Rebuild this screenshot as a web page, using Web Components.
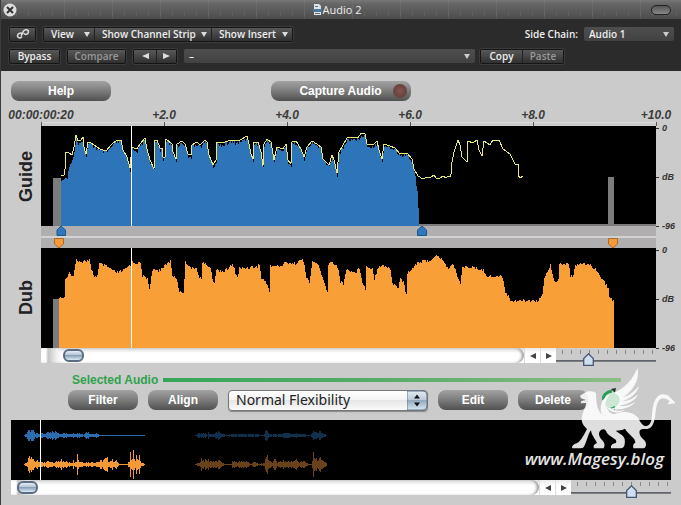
<!DOCTYPE html>
<html lang="en">
  <head>
    <meta charset="UTF-8" />
    <meta name="viewport" content="width=device-width, initial-scale=1.0" />
    <title>Audio 2</title>
    <style>
      body {
        margin: 0;
        background: #cbcbcb;
        font-family: "Liberation Sans", Arial, sans-serif;
      }
    </style>
  </head>

  <body>
    <template id="plugin-window-template">
      <style>
        :host {
          display: block;
          position: relative;
          box-sizing: border-box;
          min-height: 100vh;
          background: #cbcbcb;
          border-left: 1px solid #3c3c3c;
          overflow: hidden;
        }
        .actions {
          display: grid;
          grid-template-columns: 1fr 140px 1fr;
          padding: 10px 10px 0;
        }
        .plots {
          display: grid;
          grid-template-columns: 30px 1fr 25px;
          padding-left: 10px;
        }
        .plots time-ruler,
        .plots marker-lanes {
          grid-column: 2;
        }
        h2 {
          grid-column: 1;
          margin: 0;
          font-size: 18px;
          line-height: 30px;
          text-align: center;
          color: #222;
          writing-mode: vertical-rl;
          transform: rotate(180deg);
        }
        .scroll {
          display: flex;
          align-items: flex-start;
          height: 18px;
          padding: 0 25px 0 40px;
        }
        .scroll.wide {
          padding: 0 10px;
        }
        scroll-strip {
          flex: 1;
        }
        .selected {
          display: flex;
          align-items: center;
          gap: 5px;
          padding: 7px 60px 0 71px;
          font-size: 12px;
          font-weight: bold;
          line-height: 14px;
          color: #2ea24c;
        }
        .selected hr {
          flex: 1;
          height: 4px;
          margin: 0;
          border: 0;
          background: linear-gradient(90deg, #35a658, #58ad67 50%, #8cbe85);
        }
        .edit {
          display: flex;
          align-items: center;
          gap: 10px;
          height: 20px;
          padding: 3px 10px 10px 67px;
        }
        .edit pill-button {
          width: 70px;
        }
        .edit flex-select {
          width: 200px;
        }
        overview-plot {
          margin: 0 10px;
        }
        water-mark {
          position: absolute;
          right: 4px;
          top: 367px;
        }
      </style>
      <slot name="header"></slot>
      <div class="actions">
        <pill-button style="width: 100px">Help</pill-button>
        <pill-button record>Capture Audio</pill-button>
      </div>
      <div class="plots">
        <time-ruler></time-ruler>
        <h2>Guide</h2>
        <level-plot kind="guide"></level-plot>
        <db-axis></db-axis>
        <marker-lanes></marker-lanes>
        <h2>Dub</h2>
        <level-plot kind="dub"></level-plot>
        <db-axis></db-axis>
      </div>
      <div class="scroll">
        <scroll-strip value="48"></scroll-strip>
        <zoom-slider value="30"></zoom-slider>
      </div>
      <div class="selected"><span>Selected Audio</span><hr /></div>
      <div class="edit">
        <pill-button>Filter</pill-button>
        <pill-button>Align</pill-button>
        <flex-select></flex-select>
        <pill-button>Edit</pill-button>
        <pill-button>Delete</pill-button>
        <play-button></play-button>
      </div>
      <overview-plot></overview-plot>
      <div class="scroll wide">
        <scroll-strip value="12"></scroll-strip>
        <zoom-slider value="62"></zoom-slider>
      </div>
      <water-mark>www.Magesy.blog</water-mark>
    </template>

    <template id="title-bar-template">
      <style>
        :host {
          display: grid;
          grid-template-columns: 1fr auto 1fr;
          align-items: center;
          height: 19px;
          padding: 0 10px 0 2px;
          background:
            repeating-linear-gradient(90deg, transparent 0 11px, #7775 11px 12px) 4px 12px / 100% 4px no-repeat,
            repeating-linear-gradient(90deg, transparent 0 47px, #8883 47px 48px) 16px 0,
            linear-gradient(#777, #666 4px, #4c4c4c);
          color: #eee;
          font: 11px/18px "Open Sans", "Noto Sans", sans-serif;
        }
        button {
          display: block;
          padding: 0;
          border: 0;
          background: none;
        }
        .title {
          display: flex;
          align-items: center;
          gap: 1px;
        }
        .lozenge {
          justify-self: end;
          width: 20px;
          height: 10px;
          border: 1px solid #222;
          border-radius: 5px;
          background: linear-gradient(#555, #888);
        }
        svg {
          display: block;
        }
      </style>
      <button aria-label="Close">
        <svg width="14" height="14" viewBox="0 0 14 14">
          <circle cx="7" cy="7" r="6.5" fill="#dedede" />
          <path d="M4 4l6 6M10 4l-6 6" stroke="#333" stroke-width="2" />
        </svg>
      </button>
      <div class="title">
        <svg width="9" height="11" viewBox="0 0 9 11">
          <path d="M1 0h5l2 2v9H1z" fill="#dbe3ea" />
          <path d="M0 5h9v3H0z" fill="#50759c" />
          <path d="M2 2h3v1H2zM2 9h5v1H2z" fill="#69717a" />
        </svg>
        <slot></slot>
      </div>
      <button class="lozenge" aria-label="Toolbar"></button>
    </template>

    <template id="tool-bar-template">
      <style>
        :host {
          display: block;
          padding: 8px 7px 8px 8px;
          background: #2b2b2b;
          color: #eee;
          font: 600 10px/14px "Open Sans", "Noto Sans", sans-serif;
        }
        .row {
          display: flex;
          align-items: center;
          height: 14px;
        }
        .row + .row {
          margin-top: 8px;
        }
        .group {
          display: flex;
          margin-right: 7px;
          border: 1px solid #151515;
          border-radius: 2px;
          box-shadow: 0 0 0 1px #3b3b3b;
        }
        button {
          display: flex;
          align-items: center;
          justify-content: center;
          box-sizing: border-box;
          height: 13px;
          padding: 0 4px 0 7px;
          border: 0;
          background: linear-gradient(#585858, #303030);
          color: inherit;
          font: inherit;
          white-space: nowrap;
        }
        button + button {
          border-left: 1px solid #222;
        }
        .menu {
          justify-content: space-between;
        }
        button:disabled {
          color: #999;
        }
        .plain {
          padding: 0;
        }
        svg {
          display: block;
        }
        .pick {
          display: grid;
          align-items: center;
          border-radius: 2px;
          background: linear-gradient(#4e4e4e, #424242);
        }
        .pick > * {
          grid-area: 1 / 1;
        }
        .pick svg {
          justify-self: end;
          margin-right: 5px;
          pointer-events: none;
        }
        select {
          appearance: none;
          width: 100%;
          height: 14px;
          padding: 0 5px;
          border: 0;
          background: none;
          color: inherit;
          font: inherit;
        }
        .preset {
          flex: 0 1 291px;
          margin-right: 5px;
        }
        label {
          margin-left: auto;
          padding-right: 6px;
        }
      </style>
      <div class="row">
        <div class="group">
          <button class="plain" style="width: 25px" aria-label="Link">
            <svg width="14" height="12" viewBox="0 0 14 12" fill="none" stroke="#ddd" stroke-width="1.5">
              <path d="M6 8.5C4.500 11 1 9.800 1.600 7.300C2.200 4.800 5 4.500 6.500 6.200" />
              <path d="M5 7.800L7.500 3.200C9 .8 12.800 1.500 12.400 4.200C12 6.800 9 7 7.600 5.200" />
            </svg>
          </button>
        </div>
        <div class="group">
          <button class="menu" style="width: 50px">View <down-arrow></down-arrow></button>
          <button class="menu" style="width: 117px">Show Channel Strip <down-arrow></down-arrow></button>
          <button class="menu" style="width: 81px">Show Insert <down-arrow></down-arrow></button>
        </div>
        <label for="chain">Side Chain:</label>
        <div class="pick" style="width: 90px">
          <select id="chain"><option>Audio 1</option></select>
          <svg width="6" height="5"><path d="M0 0h6L3 5z" fill="#ccc" /></svg>
        </div>
      </div>
      <div class="row">
        <div class="group"><button class="plain" style="width: 49px">Bypass</button></div>
        <div class="group"><button class="plain" style="width: 57px" disabled>Compare</button></div>
        <div class="group">
          <button class="plain" style="width: 22px" aria-label="Previous setting">
            <svg width="7" height="6"><path d="M7 0v6L0 3z" fill="#ddd" /></svg>
          </button>
          <button class="plain" style="width: 20px" aria-label="Next setting">
            <svg width="7" height="6"><path d="M0 0v6l7-3z" fill="#ddd" /></svg>
          </button>
        </div>
        <div class="pick preset">
          <select aria-label="Setting"><option>–</option></select>
          <svg width="6" height="5"><path d="M0 0h6L3 5z" fill="#ccc" /></svg>
        </div>
        <div class="group">
          <button class="plain" style="width: 41px">Copy</button>
          <button class="plain" style="width: 41px" disabled>Paste</button>
        </div>
      </div>
    </template>

    <template id="down-arrow-template">
      <style>
        :host {
          display: block;
        }
        svg {
          display: block;
        }
      </style>
      <svg width="6" height="5"><path d="M0 0h6L3 5z" fill="#ddd" /></svg>
    </template>

    <template id="pill-button-template">
      <style>
        :host {
          display: block;
        }
        button {
          display: grid;
          grid-template-columns: 1fr;
          align-items: center;
          width: 100%;
          height: 20px;
          padding: 0;
          border: 0;
          border-radius: 8px;
          background: linear-gradient(#a2a2a2, #808080 45%, #505050);
          color: #fff;
          font: bold 12px/20px "Liberation Sans", Arial, sans-serif;
        }
        i {
          display: none;
          width: 14px;
          height: 14px;
          margin-right: 4px;
          border-radius: 7px;
          background: radial-gradient(#84564e, #6a443e 60%, #54413e);
        }
        :host([record]) button {
          grid-template-columns: 1fr 18px;
        }
        :host([record]) span {
          padding-left: 17px;
        }
        :host([record]) i {
          display: block;
        }
      </style>
      <button><span><slot></slot></span><i></i></button>
    </template>

    <template id="flex-select-template">
      <style>
        :host {
          display: grid;
          align-items: center;
        }
        select,
        svg {
          grid-area: 1 / 1;
        }
        select {
          appearance: none;
          box-sizing: border-box;
          width: 100%;
          height: 21px;
          padding: 0 7px;
          border: 1px solid #777;
          border-radius: 4px;
          background: linear-gradient(#fff, #f4f4f4 45%, #e6e6e6 50%, #fafafa);
          box-shadow: 0 1px 1px #888;
          color: #222;
          font: 14px/18px "Noto Sans", "Open Sans", sans-serif;
        }
        svg {
          justify-self: end;
          pointer-events: none;
        }
      </style>
      <select aria-label="Flexibility"><option>Normal Flexibility</option></select>
      <svg width="21" height="21" viewBox="0 0 21 21">
        <defs>
          <linearGradient id="cap" x2="0" y2="1">
            <stop offset="0" stop-color="#e4ebf2" />
            <stop offset=".48" stop-color="#bac8d7" />
            <stop offset=".5" stop-color="#94a9be" />
            <stop offset="1" stop-color="#d9e8f2" />
          </linearGradient>
        </defs>
        <path d="M0 1h16q4 0 4 4v11q0 4-4 4H0z" fill="url(#cap)" stroke="#65758a" />
        <path d="M7 8.500l3-4 3 4zM7 12.500l3 4 3-4z" fill="#111" />
      </svg>
    </template>

    <template id="play-button-template">
      <style>
        :host {
          display: block;
        }
        button {
          display: block;
          margin-left: 4px;
          padding: 0;
          border: 0;
          background: none;
        }
        svg {
          display: block;
        }
      </style>
      <button aria-label="Cycle">
        <svg width="22" height="26" viewBox="0 0 22 26">
          <circle cx="11" cy="13" r="9" fill="#cce7d6" />
          <path d="M10 4C4 5 1 9 1 13" fill="none" stroke="#2a9d55" stroke-width="3" />
          <path d="M8 21l5-2v5z" fill="#2a9d55" />
          <path d="M9 2l5-1-1 5z" fill="#22352a" />
        </svg>
      </button>
    </template>

    <template id="time-ruler-template">
      <style>
        :host {
          display: flex;
          justify-content: space-between;
          padding-top: 7px;
          color: #3b3b3b;
          font: italic bold 12px/14px "Liberation Sans", Arial, sans-serif;
          background: linear-gradient(#dadada, #dadada) 0 21px / 100% 1px no-repeat;
        }
        span {
          display: flex;
          flex-direction: column;
          align-items: center;
          width: 0;
          white-space: nowrap;
        }
        span::after {
          content: "";
          width: 1px;
          height: 4px;
          background: #555;
        }
      </style>
      <span>00:00:00:20</span><span>+2.0</span><span>+4.0</span><span>+6.0</span><span>+8.0</span><span>+10.0</span>
    </template>

    <template id="db-axis-template">
      <style>
        :host {
          display: flex;
          flex-direction: column;
          justify-content: space-between;
          padding-top: 2px;
          color: #333;
          font: italic bold 9px/10px "Liberation Sans", Arial, sans-serif;
        }
        span {
          display: flex;
          align-items: center;
          gap: 3px;
          height: 0;
        }
        span::before {
          content: "";
          width: 3px;
          height: 1px;
          background: #333;
        }
      </style>
      <span>0</span><span>dB</span><span>-96</span>
    </template>

    <template id="marker-lanes-template">
      <style>
        :host {
          display: block;
        }
        svg {
          display: block;
          width: 100%;
          height: 22px;
        }
      </style>
      <svg viewBox="0 0 615 22" preserveAspectRatio="none">
        <path d="M0 0h615v10H0zM0 12h615v10H0z" fill="#b0aeae" />
        <path d="M0 10h615v2H0z" fill="#d2d2d2" />
        <g fill="#2f78bd" stroke="#1d578f">
          <path d="M16 9.500V4l4-4 4.500 4v5.500z" />
          <path d="M376.500 9.500V4l4.500-4 4.500 4v5.500z" />
        </g>
        <g fill="#f59a34" stroke="#a86c2c">
          <path d="M13.500 12.500V18l4.500 4 4.500-4v-5.500z" />
          <path d="M567.500 12.500V18l4.500 4 4.500-4v-5.500z" />
        </g>
      </svg>
    </template>

    <template id="level-plot-template">
      <style>
        :host {
          display: block;
          background: #000;
        }
        svg {
          display: block;
          width: 100%;
          height: 100px;
          shape-rendering: crispEdges;
        }
      </style>
      <svg viewBox="0 0 615 100" preserveAspectRatio="none"></svg>
    </template>

    <template id="scroll-strip-template">
      <style>
        :host {
          display: flex;
          height: 15px;
          min-width: 0;
          background: linear-gradient(#d8d8d8, #fff 5px);
        }
        input {
          appearance: none;
          flex: 1;
          min-width: 0;
          height: 15px;
          margin: 0;
          border-radius: 0 8px 8px 0;
          background: linear-gradient(90deg, #fff 5px, #c4c4c4 7px, #f2f2f2 16px, transparent 22px);
          box-shadow: inset -3px 0 3px -1px #999;
        }
        input::-webkit-slider-thumb {
          appearance: none;
          box-sizing: border-box;
          width: 21px;
          height: 13px;
          border: 2px solid #5c6d83;
          border-radius: 6px;
          background: linear-gradient(#e4edf5, #b8c8d8 40%, #8ba1b8 50%, #dcecf6);
        }
        button {
          display: grid;
          place-items: center;
          width: 16px;
          height: 15px;
          padding: 0;
          border: 0;
          border-left: 1px solid #ddd;
          background: linear-gradient(#e9e9e9, #fff 5px);
        }
      </style>
      <input type="range" min="0" max="1000" aria-label="Scroll" />
      <button aria-label="Scroll left">
        <svg width="6" height="6"><path d="M6 0v6L0 3z" fill="#444" /></svg>
      </button>
      <button aria-label="Scroll right">
        <svg width="6" height="6"><path d="M0 0v6l6-3z" fill="#444" /></svg>
      </button>
    </template>

    <template id="zoom-slider-template">
      <style>
        :host {
          display: block;
          width: 100px;
          height: 18px;
          background:
            linear-gradient(#505860, #8b8b8b) 0 12px / 100% 2px no-repeat,
            repeating-linear-gradient(90deg, transparent 0 6px, #888 6px 7px, transparent 7px 9px) 0 2px / 100% 4px no-repeat;
        }
        input {
          appearance: none;
          display: block;
          width: 100px;
          height: 18px;
          margin: 0;
          padding-top: 4px;
          box-sizing: border-box;
          background: none;
        }
        input::-webkit-slider-thumb {
          appearance: none;
          width: 11px;
          height: 13px;
          background: url("data:image/svg+xml,%3Csvg xmlns='http://www.w3.org/2000/svg' width='11' height='13'%3E%3Cpath d='M.7 12.300V5.500L5.500.8l4.800 4.700v6.800z' fill='%23cfdef0' stroke='%23455670' stroke-width='1.300'/%3E%3C/svg%3E");
        }
      </style>
      <input type="range" min="0" max="100" aria-label="Zoom" />
    </template>

    <template id="overview-plot-template">
      <style>
        :host {
          display: block;
          background: #000;
        }
        svg {
          display: block;
          width: 100%;
          height: 60px;
          shape-rendering: crispEdges;
        }
      </style>
      <svg viewBox="0 0 660 60" preserveAspectRatio="none"></svg>
    </template>

    <template id="water-mark-template">
      <style>
        :host {
          display: flex;
          flex-direction: column;
          align-items: flex-end;
          color: #e4e4e4;
          font: italic 600 17px/20px "Open Sans", "Noto Sans", sans-serif;
          pointer-events: none;
        }
        svg {
          display: block;
          opacity: 0.87;
        }
        span {
          margin-right: 13px;
        }
      </style>
      <svg width="108" height="82" viewBox="24 21 324 246" fill="#fff">
        <path
          d="M57 107L71 98C84 91 99 93 105 99C105 124 108 150 122 163C138 171 151 165 163 161C192 151 220 157 233 176C240 191 247 198 257 199L250 207C237 207 233 211 237 225C242 237 255 241 255 252Q255 264 247 265H217Q214 252 223 248C224 232 202 225 192 206C184 211 174 211 165 212C171 220 189 224 191 238C193 254 190 264 180 265H150Q148 253 161 250Q169 248 164 239C154 230 138 225 135 212Q129 205 121 209C110 216 113 230 124 241Q135 252 128 265H99Q94 254 108 249C103 237 91 225 90 211C82 219 80 238 70 258Q68 265 59 265H33Q32 254 47 250Q59 246 78 207C68 198 59 187 63 169C66 151 76 140 75 129L59 130L61 123L75 120L60 115Z"
        />
        <path
          d="M122 163C113 137 125 112 147 103C125 128 133 144 151 154C163 160 181 157 193 149C182 153 166 155 157 148C185 150 211 142 223 126C208 136 189 140 174 137C202 134 225 120 231 103C216 117 201 124 183 124C208 116 229 99 234 78C219 95 207 105 187 111C213 94 237 62 230 23C214 59 191 86 158 98C177 105 179 120 174 130C164 145 150 151 136 139C142 158 153 164 163 162L145 171Z"
        />
        <path
          d="M249 198C269 202 272 181 273 163C276 126 285 103 307 103Q314 103 321 108L317 101L344 130L319 133L326 123C305 106 292 116 287 137C280 165 286 210 250 207Z"
        />
      </svg>
      <span><slot></slot></span>
    </template>

    <plugin-window>
      <title-bar slot="header">Audio 2</title-bar>
      <tool-bar slot="header"></tool-bar>
    </plugin-window>

    <script>
      // x,y pairs on the 615x100 plot
      const contour = "27,45 28,40 30,33 32,30 34,18 35,9 37,15 40,14 42,11 43,21 45,28 47,16 50,17 59,23 65,25 71,18 76,14 80,14 82,24 86,31 89,42 91,21 93,22 96,23 99,18 104,12 106,23 109,34 113,43 114,14 116,14 119,22 121,22 122,31 124,31 125,13 131,18 132,26 135,33 136,18 141,15 144,18 147,28 150,29 151,19 156,16 159,19 164,14 166,16 168,29 172,39 175,34 176,16 182,17 189,14 194,15 199,14 206,10 208,18 210,28 212,33 213,16 217,16 220,26 222,40 223,18 226,13 230,16 233,34 236,21 242,23 245,18 247,34 250,38 251,16 255,15 260,23 263,31 266,21 271,15 276,18 280,21 282,33 288,39 291,29 293,34 296,47 298,26 302,19 306,12 312,11 317,12 320,7 324,8 326,18 332,19 336,15 338,24 341,33 343,18 349,20 354,22 359,28 366,27 371,33";
      const guideTail = "373,43 377,50 382,53 386,51 389,52 393,49 396,53 399,52 402,50 405,52 407,50 409,51 410,48 411,36 413,26 417,14 419,19 421,31 426,36 427,15 432,17 436,14 438,24 441,30 443,15 449,19 452,14 458,14 462,23 469,28 474,38 477,38 477,49 479,52 482,50";
      const dubLevel = "18,48 23,48 24,31 28,24 32,27 35,9 38,12 48,11 50,21 53,27 56,26 58,14 67,18 74,23 81,22 87,17 91,13 99,14 101,26 106,29 108,39 111,21 117,21 124,16 129,11 131,26 135,29 138,42 142,43 144,13 152,20 155,17 158,29 160,28 161,13 169,18 171,29 173,33 175,20 183,22 191,15 196,28 198,19 216,17 218,14 220,29 224,32 228,41 229,16 239,17 244,13 254,14 260,10 263,14 265,29 268,33 271,12 277,15 280,26 286,42 287,16 290,12 296,17 299,32 302,34 305,20 314,23 318,18 321,32 324,40 325,17 331,19 333,29 337,17 341,15 349,20 351,34 357,38 359,29 362,32 365,46 366,24 376,13 391,10 396,6 402,11 406,19 412,15 416,26 419,34 421,18 426,17 442,21 446,27 461,27 464,42 469,51 497,51 501,44 503,29 509,15 512,29 515,33 517,31 518,15 527,14 529,26 532,27 534,15 549,15 556,22 567,39 568,49 573,51";

      // x,half-height pairs on the 660x60 overview
      const overview = [
        { y: 15, color: "#2b6cb0", to: 134, env: "13,0 16,3 17,7 19,5 21,7 24,3 30,2 40,3 43,5 46,3 55,2 67,3 70,2 72,0 74,5 77,3 80,1 85,3 88,0" },
        { y: 44, color: "#f39a36", to: 134, env: "13,0 16,2 17,10 20,8 24,4 27,6 30,2 36,3 42,2 48,4 50,9 52,3 60,3 65,5 66,13 68,4 75,2 85,3 90,4 95,7 98,5 103,5 106,3 108,0 116,0 118,3 119,11 121,5 122,13 126,9 128,9 130,2 133,0" },
        { y: 15, color: "#12304c", to: 316, env: "184,0 189,3 194,2 196,0 197,3 202,1 206,4 211,2 214,0 221,1 246,1 252,0 255,5 260,1 268,1 272,3 292,1 299,0 301,4 309,4 313,1 316,0" },
        { y: 44, color: "#69411a", to: 316, env: "184,0 188,1 190,7 193,4 197,5 204,3 209,4 213,0 220,0 221,4 229,3 235,4 240,0 243,4 247,0 252,1 256,9 260,3 264,5 268,3 272,5 276,3 284,6 288,3 294,3 297,0 300,0 302,12 304,7 308,7 312,5 316,0" },
      ];

      const parse = (text) => text.split(" ").map((pair) => pair.split(",").map(Number));
      const noise = (x) => {
        const n = Math.sin(x * 12.9898) * 43758.5453;
        return n - Math.floor(n);
      };

      function levelAt(points, x) {
        const i = points.findIndex((p) => p[0] > x);
        if (i < 1) return i === 0 ? points[0][1] : points[points.length - 1][1];
        const [x0, y0] = points[i - 1];
        const [x1, y1] = points[i];
        return y0 + ((y1 - y0) * (x - x0)) / (x1 - x0);
      }

      function area(text, rough) {
        const points = parse(text);
        const start = points[0][0];
        const end = points[points.length - 1][0];
        let d = `M${start} 100`;
        for (let x = start; x < end; x++) {
          const y = Math.round(levelAt(points, x) + noise(x) * rough);
          d += `V${y}H${x + 1}`;
        }
        return d + "V100z";
      }

      function define(name, setup) {
        customElements.define(
          name,
          class extends HTMLElement {
            constructor() {
              super();
              const root = this.attachShadow({ mode: "open" });
              root.appendChild(document.querySelector(`#${name}-template`).content.cloneNode(true));
            }
            connectedCallback() {
              if (setup) setup(this, this.shadowRoot);
            }
          }
        );
      }

      const setRange = (host, root) => {
        root.querySelector("input").value = host.getAttribute("value");
      };

      define("level-plot", (host, root) => {
        const svg = root.querySelector("svg");
        const playhead = `<path d="M90 0h1v100h-1z" fill="#fff"/>`;
        if (host.getAttribute("kind") === "guide") {
          svg.innerHTML = `
            <path d="M12 52h8v48h-8zM567 51h6v49h-6zM378 98h237v2h-237z" fill="#7c7c7c"/>
            <path d="${area("20,52 26,51 " + contour + " 374,49 376,63 378,98 379,100", 4)}" fill="#2e74b8"/>
            <polyline points="20,49 23,49 24,43 25,26 27,26 31,29 33,21 ${contour.slice(contour.indexOf("35,9"))} ${guideTail}"
              fill="none" stroke="#e8e87a"/>${playhead}`;
        } else {
          svg.innerHTML = `
            <path d="M12 51h6v49h-6z" fill="#7c7c7c"/>
            <path d="${area(dubLevel, 3)}" fill="#f99f38"/>${playhead}`;
        }
      });

      define("overview-plot", (host, root) => {
        let marks = "";
        for (const { y, color, to, env } of overview) {
          const points = parse(env);
          let d = `M${points[0][0]} ${y}H${to}v1H${points[0][0]}z`;
          for (let x = points[0][0]; x < points[points.length - 1][0]; x++) {
            const h = Math.round(levelAt(points, x) * (0.3 + noise(x) * 0.8));
            if (h > 0) d += `M${x} ${y - h}h1v${2 * h + 1}h-1z`;
          }
          marks += `<path d="${d}" fill="${color}"/>`;
        }
        root.querySelector("svg").innerHTML = marks + `<path d="M29 0h1v60h-1z" fill="#fff"/>`;
      });

      define("scroll-strip", setRange);
      define("zoom-slider", setRange);
      define("down-arrow");
      define("title-bar");
      define("tool-bar");
      define("pill-button");
      define("flex-select");
      define("play-button");
      define("time-ruler");
      define("db-axis");
      define("marker-lanes");
      define("water-mark");
      define("plugin-window");
    </script>
  </body>
</html>
